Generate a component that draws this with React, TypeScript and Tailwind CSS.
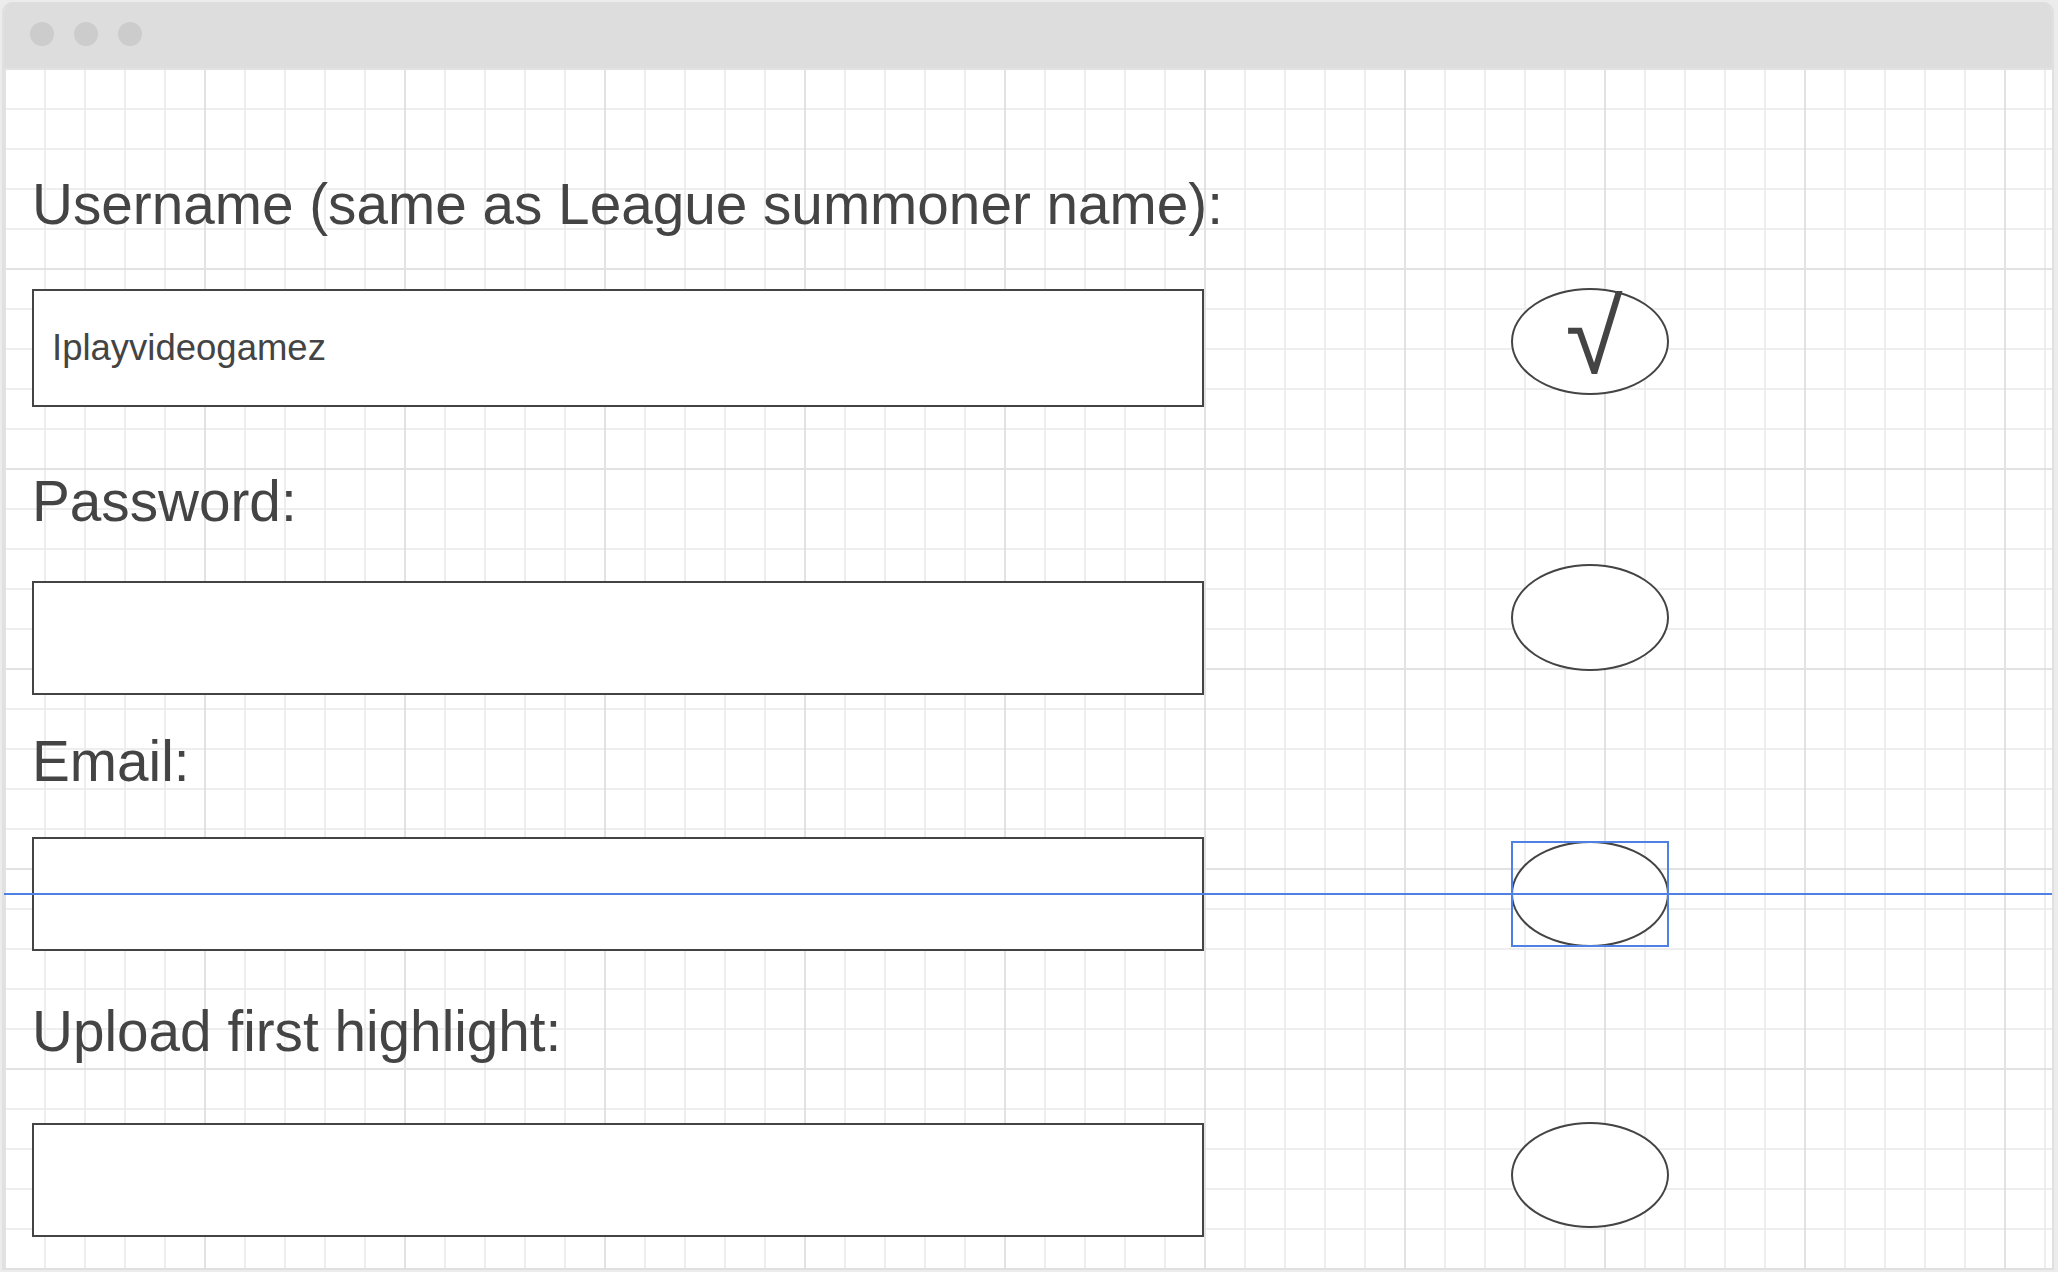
import React from "react";

const labelCls =
  "block text-[56.7px] leading-[56px] text-[#444444] whitespace-nowrap font-['Liberation_Sans',Arial,sans-serif]";
const inputCls = "w-[1172px] border-2 border-[#444444] bg-white";
const ovalCls = "w-[158px] border-2 border-[#444444] rounded-[50%] bg-white";

const App: React.FC = () => {
  return (
    <div className="w-[2058px] h-[1272px] bg-[#ececec] pt-[2px] pl-[2px] pr-[4px] pb-[2px] font-['Liberation_Sans',Arial,sans-serif]">
      <div className="flex h-full flex-col overflow-hidden rounded-t-[10px] border-x-2 border-b-2 border-[#e0e0e0]">
        {/* Window title bar */}
        <div className="flex h-[66px] shrink-0 items-center gap-[20px] bg-[#dddddd] pl-[26px] pb-[2px]">
          <span className="h-[24px] w-[24px] rounded-full bg-[#cccccc]" />
          <span className="h-[24px] w-[24px] rounded-full bg-[#cccccc]" />
          <span className="h-[24px] w-[24px] rounded-full bg-[#cccccc]" />
        </div>

        {/* Canvas with grid */}
        <div className="relative flex flex-1 bg-white bg-[linear-gradient(to_right,#e2e2e2_2px,transparent_2px),linear-gradient(to_bottom,#e2e2e2_2px,transparent_2px),linear-gradient(to_right,#eeeeee_2px,transparent_2px),linear-gradient(to_bottom,#eeeeee_2px,transparent_2px)] bg-[size:200px_200px,200px_200px,40px_40px,40px_40px] bg-[position:0px_0px]">
          {/* Form column */}
          <div className="flex w-[1200px] shrink-0 flex-col pl-[28px]">
            <span className={`${labelCls} mt-[109px]`}>
              Username (same as League summoner name):
            </span>
            <div className={`${inputCls} mt-[56px] flex h-[118px] items-center pl-[18px]`}>
              <span className="text-[36.5px] leading-none text-[#444444]">Iplayvideogamez</span>
            </div>

            <span className={`${labelCls} mt-[67px]`}>Password:</span>
            <div className={`${inputCls} mt-[51px] h-[114px]`} />

            <span className={`${labelCls} mt-[39px]`}>Email:</span>
            <div className={`${inputCls} mt-[47px] h-[114px]`} />

            <span className={`${labelCls} mt-[53px]`}>Upload first highlight:</span>
            <div className={`${inputCls} mt-[63px] h-[114px]`} />
          </div>

          {/* Status ovals */}
          <div className="ml-[307px] flex w-[158px] flex-col">
            <div className={`${ovalCls} mt-[220px] flex h-[107px] items-center justify-center`}>
              <span className="-mt-[10px] ml-[8px] text-[104px] leading-none text-[#444444]">√</span>
            </div>
            <div className={`${ovalCls} mt-[169px] h-[107px]`} />
            <div className="mt-[170px] h-[106px] w-[158px] outline-2 outline-[#4f80e3] -outline-offset-2">
              <div className={`${ovalCls} h-[106px]`} />
            </div>
            <div className={`${ovalCls} mt-[175px] h-[106px]`} />
          </div>

          {/* Alignment guide */}
          <div className="absolute left-0 right-0 top-[825px] h-[2px] bg-[#4f80e3]" />
        </div>
      </div>
    </div>
  );
};

export default App;
